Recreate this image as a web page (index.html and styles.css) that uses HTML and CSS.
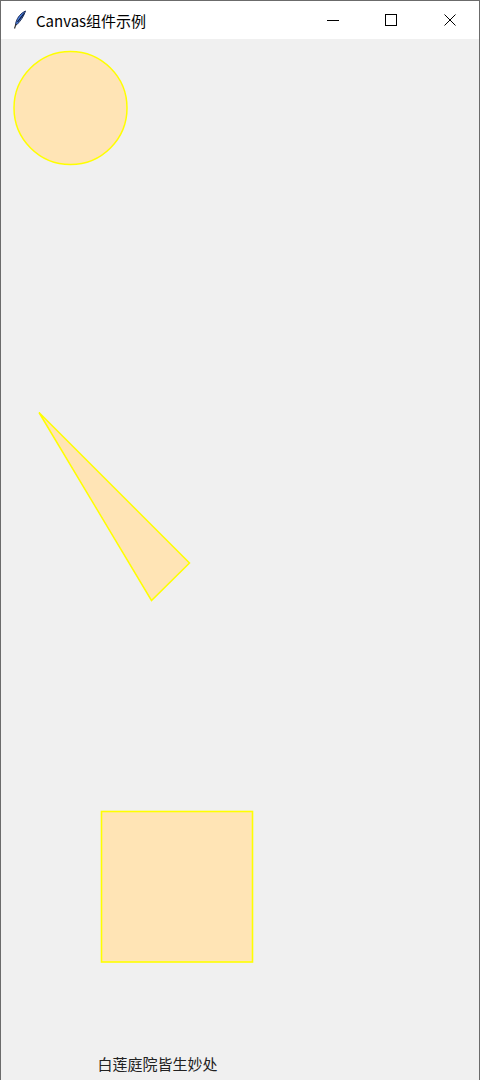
FILE: index.html
```html
<!DOCTYPE html>
<html lang="zh">
<head>
<meta charset="utf-8">
<title>Canvas组件示例</title>
<link rel="stylesheet" href="styles.css">
</head>
<body>
<div class="window">
  <div class="titlebar">
    <svg class="app-icon" width="14" height="20" viewBox="0 0 14 20">
      <path d="M12.5 1 C8 3 4.5 7 3 12 L2.5 15 L4 14.5 C7.5 11 11 6 12.5 1 Z" fill="#4a7fe0" stroke="#1f2f5a" stroke-width="1"/>
      <path d="M11 3.5 L4.5 12" stroke="#0d1a3a" stroke-width="1.2"/>
      <path d="M3 14 L1.5 18.5" stroke="#333" stroke-width="1.2"/>
    </svg>
    <span class="title">Canvas组件示例</span>
    <div class="controls">
      <div class="ctl">
        <svg width="14" height="14" viewBox="0 0 14 14"><path d="M1 7.5 H13" stroke="#000" stroke-width="1"/></svg>
      </div>
      <div class="ctl">
        <svg width="14" height="14" viewBox="0 0 14 14"><rect x="1.5" y="1.5" width="11" height="11" fill="none" stroke="#000" stroke-width="1"/></svg>
      </div>
      <div class="ctl ctl-close">
        <svg width="14" height="14" viewBox="0 0 14 14"><path d="M1.5 1.5 L12.5 12.5 M12.5 1.5 L1.5 12.5" stroke="#000" stroke-width="1"/></svg>
      </div>
    </div>
  </div>
  <div class="canvas-area">
    <svg class="canvas" width="478" height="1041" viewBox="1 39 478 1041">
      <circle cx="70.5" cy="108" r="56.5" fill="#ffe4b5" stroke="#ffff00" stroke-width="1.5"/>
      <polygon points="39,412.5 189.5,563 151.5,600.5" fill="#ffe4b5" stroke="#ffff00" stroke-width="1.5" stroke-linejoin="miter"/>
      <rect x="101.5" y="811.5" width="151" height="150.5" fill="#ffe4b5" stroke="#ffff00" stroke-width="1.6"/>
      <text x="157.5" y="1069.5" text-anchor="middle" class="canvas-text">白莲庭院皆生妙处</text>
    </svg>
  </div>
</div>
</body>
</html>
```
FILE: styles.css
```css
html, body {
  margin: 0;
  padding: 0;
  background: #f0f0f0;
}
.window {
  width: 480px;
  height: 1080px;
  box-sizing: border-box;
  border: 1px solid #6b6b6b;
  border-bottom: none;
  display: flex;
  flex-direction: column;
  overflow: hidden;
  background: #f0f0f0;
}
.titlebar {
  height: 38px;
  flex: none;
  background: #ffffff;
  display: flex;
  align-items: center;
  padding-left: 12px;
  font-family: "Noto Sans CJK SC", "Noto Sans", sans-serif;
}
.app-icon {
  flex: none;
  margin-right: 9px;
  margin-top: -1px;
}
.title {
  font-size: 15px;
  color: #000;
  letter-spacing: 0;
}
.controls {
  margin-left: auto;
  display: flex;
  height: 100%;
}
.ctl {
  width: 58px;
  height: 100%;
  display: flex;
  align-items: center;
  justify-content: center;
}
.ctl-close {
  width: 59px;
}
.canvas-area {
  flex: 1;
  background: #f0f0f0;
}
.canvas {
  display: block;
}
.canvas-text {
  font-family: "Noto Sans CJK SC", sans-serif;
  font-size: 15px;
  fill: #222;
}
```
